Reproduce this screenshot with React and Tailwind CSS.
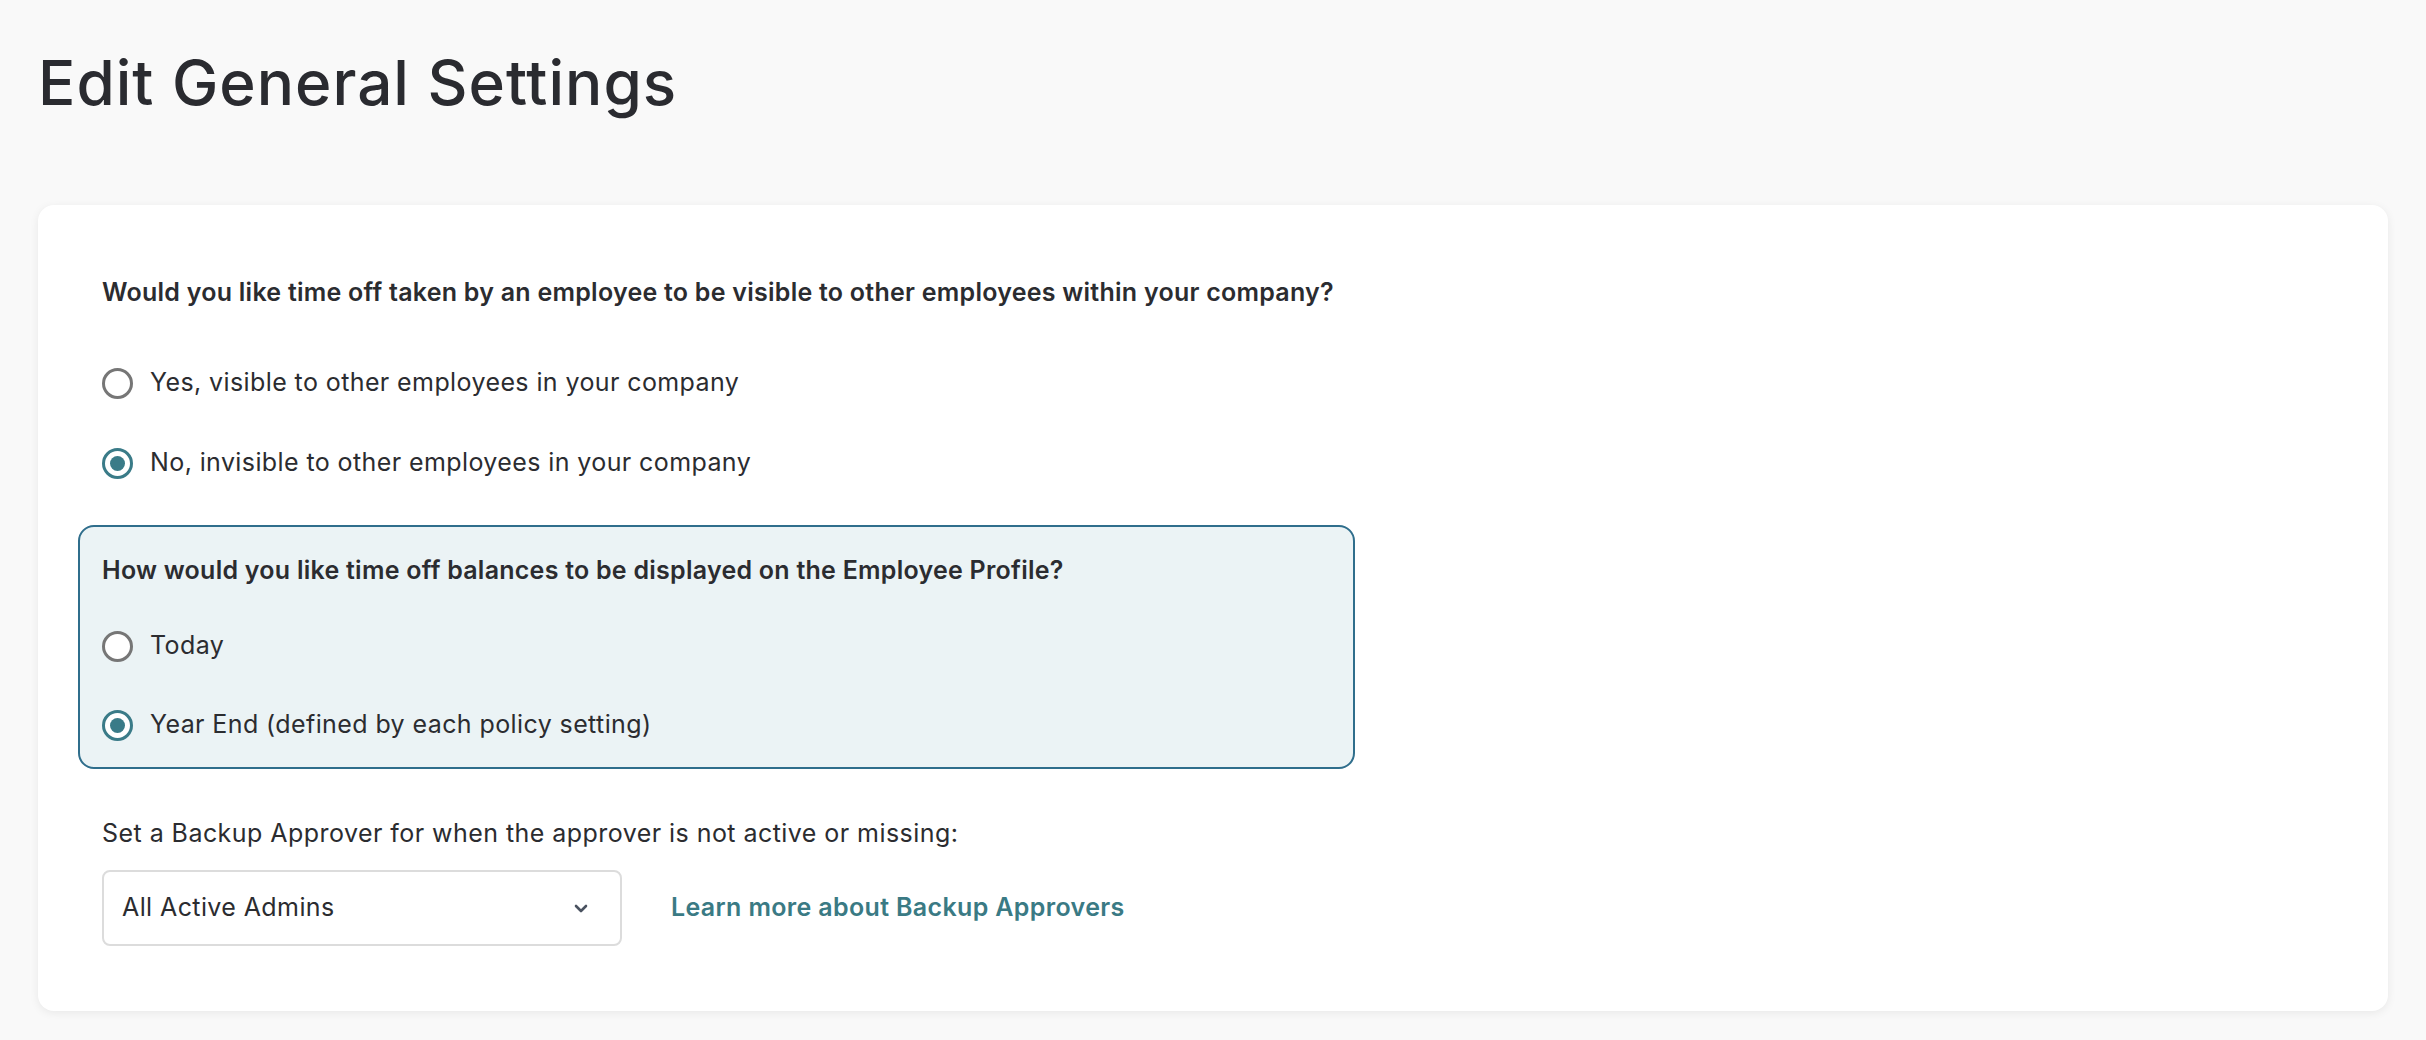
import { useState } from 'react'

const font = { fontFamily: 'Inter, "Noto Sans", sans-serif' }

function Radio({ checked, label, onSelect }) {
  return (
    <label className="flex items-center gap-[17px] h-[36px] cursor-pointer" onClick={onSelect}>
      <span
        className={`flex items-center justify-center w-[31px] h-[31px] rounded-full border-[3px] bg-white shrink-0 ${
          checked ? 'border-[#3a7b88]' : 'border-[#767676]'
        }`}
      >
        {checked && <span className="w-[15px] h-[15px] rounded-full bg-[#3a7b88]" />}
      </span>
      <span className="text-[25px] tracking-[0.4px] text-[#2b2c30]">{label}</span>
    </label>
  )
}

export default function App() {
  const [visible, setVisible] = useState('no')
  const [balance, setBalance] = useState('year')

  return (
    <div className="min-h-screen bg-[#f9f9f9] px-[38px] pt-[47px] pb-[30px]" style={font}>
      <h1 className="text-[62px] leading-[72px] font-medium text-[#2a2b30] tracking-[1px]">Edit General Settings</h1>

      <div className="mt-[86px] bg-white rounded-[16px] shadow-[0_2px_10px_rgba(0,0,0,0.07)] px-[64px] pt-[69px] pb-[65px]">
        <p className="text-[25px] leading-[36px] font-semibold tracking-[0.25px] text-[#2b2c30]">
          Would you like time off taken by an employee to be visible to other employees within your company?
        </p>

        <div className="mt-[55px] flex flex-col gap-[44px]">
          <Radio
            checked={visible === 'yes'}
            label="Yes, visible to other employees in your company"
            onSelect={() => setVisible('yes')}
          />
          <Radio
            checked={visible === 'no'}
            label="No, invisible to other employees in your company"
            onSelect={() => setVisible('no')}
          />
        </div>

        {/* highlighted question block */}
        <div className="mt-[44px] -ml-[24px] w-[1277px] rounded-[16px] border-[2px] border-[#2f6e8c] bg-[#ebf3f5] px-[22px] pt-[25px] pb-[24px]">
          <p className="text-[25px] leading-[36px] font-semibold tracking-[0.25px] text-[#2b2c30]">
            How would you like time off balances to be displayed on the Employee Profile?
          </p>
          <div className="mt-[40px] flex flex-col gap-[43px]">
            <Radio checked={balance === 'today'} label="Today" onSelect={() => setBalance('today')} />
            <Radio
              checked={balance === 'year'}
              label="Year End (defined by each policy setting)"
              onSelect={() => setBalance('year')}
            />
          </div>
        </div>

        <p className="mt-[46px] text-[25px] leading-[36px] tracking-[0.45px] text-[#2b2c30]">
          Set a Backup Approver for when the approver is not active or missing:
        </p>

        <div className="mt-[19px] flex items-center gap-[49px]">
          <button className="flex items-center justify-between w-[520px] h-[76px] rounded-[8px] border-[2px] border-[#dcdcdc] bg-white pl-[18px] pr-[32px]">
            <span className="text-[25px] tracking-[0.4px] text-[#2b2c30]">All Active Admins</span>
            <svg width="14" height="9" viewBox="0 0 14 9" fill="none">
              <path d="M2 2l5 5 5-5" stroke="#4a5260" strokeWidth="2.6" strokeLinecap="round" strokeLinejoin="round" />
            </svg>
          </button>
          <a href="#" className="text-[25px] font-semibold tracking-[0.35px] text-[#3a7a84]">
            Learn more about Backup Approvers
          </a>
        </div>
      </div>
    </div>
  )
}
